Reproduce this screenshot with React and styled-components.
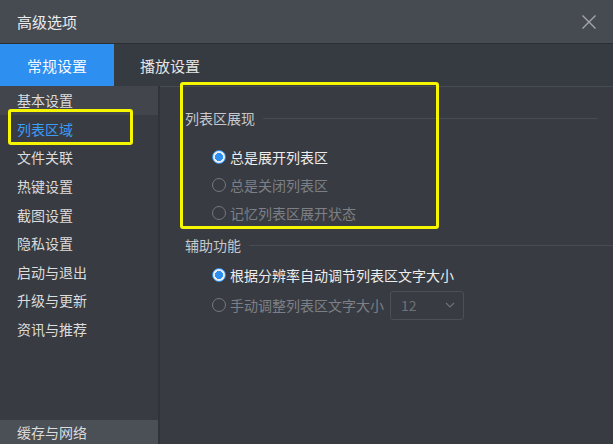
import React from "react";
import styled, { createGlobalStyle } from "styled-components";

const GlobalStyle = createGlobalStyle`
  html, body {
    margin: 0;
    padding: 0;
    background: #363a41;
  }
  * {
    box-sizing: border-box;
  }
`;

const Window = styled.div`
  position: relative;
  width: 613px;
  height: 444px;
  display: flex;
  flex-direction: column;
  background: #363a41;
  font-family: "Noto Sans CJK SC", "Noto Sans", sans-serif;
  overflow: hidden;
`;

const TitleBar = styled.div`
  height: 44px;
  flex: none;
  display: flex;
  align-items: center;
  justify-content: space-between;
  padding: 0 12px 0 17px;
  background: #464a51;
  border-bottom: 1px solid #2b2e33;
`;

const Title = styled.span`
  font-size: 15px;
  color: #ececec;
`;

const CloseButton = styled.button`
  width: 24px;
  height: 24px;
  padding: 0;
  border: none;
  background: none;
  display: flex;
  align-items: center;
  justify-content: center;
  cursor: pointer;
`;

const TabBar = styled.div`
  height: 42px;
  flex: none;
  display: flex;
`;

const Tab = styled.div`
  display: flex;
  align-items: center;
  justify-content: center;
  width: ${(p) => (p.$active ? "114px" : "auto")};
  padding: ${(p) => (p.$active ? "0" : "0 0 0 26px")};
  font-size: 15px;
  color: ${(p) => (p.$active ? "#f4f8ff" : "#e4e4e4")};
  background: ${(p) => (p.$active ? "#2d8ff0" : "transparent")};
`;

const Body = styled.div`
  flex: 1;
  display: flex;
  min-height: 0;
`;

const Sidebar = styled.div`
  width: 160px;
  flex: none;
  display: flex;
  flex-direction: column;
  background: #383b42;
  border-right: 2px solid #303339;
`;

const NavItem = styled.div`
  height: 28.6px;
  display: flex;
  align-items: center;
  padding-left: 17px;
  font-size: 14px;
  color: ${(p) => (p.$active ? "#3a9df6" : "#dcdcdc")};
  background: ${(p) => (p.$hover ? "#42454c" : "transparent")};
`;

const BottomItem = styled(NavItem)`
  margin-top: auto;
  height: 24px;
  background: #4b4f56;
`;

const Content = styled.div`
  flex: 1;
  border-top: 1px solid #474b52;
  padding: 21px 15px 0 25px;
  background: #383b42;
`;

const GroupHeader = styled.div`
  display: flex;
  align-items: center;
  gap: 8px;
  height: 20px;
  margin-right: ${(p) => (p.$full ? "-15px" : "0")};
  font-size: 14px;
  color: #c6c8cc;
  &::after {
    content: "";
    flex: 1;
    height: 1px;
    background: #474b52;
  }
`;

const Options = styled.div`
  display: flex;
  flex-direction: column;
  padding-left: 27px;
  margin-top: ${(p) => p.$top}px;
  margin-bottom: ${(p) => p.$bottom}px;
`;

const OptionRow = styled.label`
  height: ${(p) => p.$h}px;
  display: flex;
  align-items: center;
  gap: 4px;
  font-size: 14px;
  color: ${(p) => (p.$checked ? "#ececec" : "#7c8086")};
`;

const RadioDot = styled.span`
  width: 14px;
  height: 14px;
  border-radius: 50%;
  flex: none;
  border: 1.5px solid ${(p) => (p.$checked ? "#2d8ff0" : "#75797f")};
  background: ${(p) =>
    p.$checked ? "radial-gradient(circle, #2d8ff0 0 3.8px, #e9eef5 4.3px)" : "transparent"};
`;

const Select = styled.div`
  width: 74px;
  height: 29px;
  margin-left: 2px;
  display: flex;
  align-items: center;
  justify-content: space-between;
  padding: 0 8px 0 10px;
  border: 1px solid #4b4f56;
  border-radius: 3px;
  font-size: 14px;
  color: #6e7278;
`;

const Highlight = styled.div`
  position: absolute;
  border: 3px solid #f6f600;
  border-radius: 3px;
  pointer-events: none;
`;

const navItems = [
  "基本设置",
  "列表区域",
  "文件关联",
  "热键设置",
  "截图设置",
  "隐私设置",
  "启动与退出",
  "升级与更新",
  "资讯与推荐",
];

const Radio = ({ checked, label, h, children }) => (
  <OptionRow $checked={checked} $h={h}>
    <RadioDot $checked={checked} />
    {label}
    {children}
  </OptionRow>
);

export default function App() {
  return (
    <>
      <GlobalStyle />
      <Window>
        <TitleBar>
          <Title>高级选项</Title>
          <CloseButton aria-label="close">
            <svg width="16" height="16" viewBox="0 0 16 16">
              <path d="M1.5 1.5 L14.5 14.5 M14.5 1.5 L1.5 14.5" stroke="#a3a7ac" strokeWidth="1.4" />
            </svg>
          </CloseButton>
        </TitleBar>
        <TabBar>
          <Tab $active>常规设置</Tab>
          <Tab>播放设置</Tab>
        </TabBar>
        <Body>
          <Sidebar>
            {navItems.map((name, i) => (
              <NavItem key={name} $hover={i === 0} $active={i === 1}>
                {name}
              </NavItem>
            ))}
            <BottomItem>缓存与网络</BottomItem>
          </Sidebar>
          <Content>
            <GroupHeader>列表区展现</GroupHeader>
            <Options $top={15} $bottom={8}>
              <Radio checked h={28} label="总是展开列表区" />
              <Radio h={28} label="总是关闭列表区" />
              <Radio h={28} label="记忆列表区展开状态" />
            </Options>
            <GroupHeader $full>辅助功能</GroupHeader>
            <Options $top={5} $bottom={0}>
              <Radio checked h={30} label="根据分辨率自动调节列表区文字大小" />
              <Radio h={30} label="手动调整列表区文字大小">
                <Select>
                  12
                  <svg width="10" height="6" viewBox="0 0 10 6">
                    <path d="M1 1 L5 5 L9 1" fill="none" stroke="#6e7278" strokeWidth="1.2" />
                  </svg>
                </Select>
              </Radio>
            </Options>
          </Content>
        </Body>
        <Highlight style={{ left: 8, top: 109, width: 125, height: 36 }} />
        <Highlight style={{ left: 180, top: 82, width: 259, height: 147 }} />
      </Window>
    </>
  );
}
